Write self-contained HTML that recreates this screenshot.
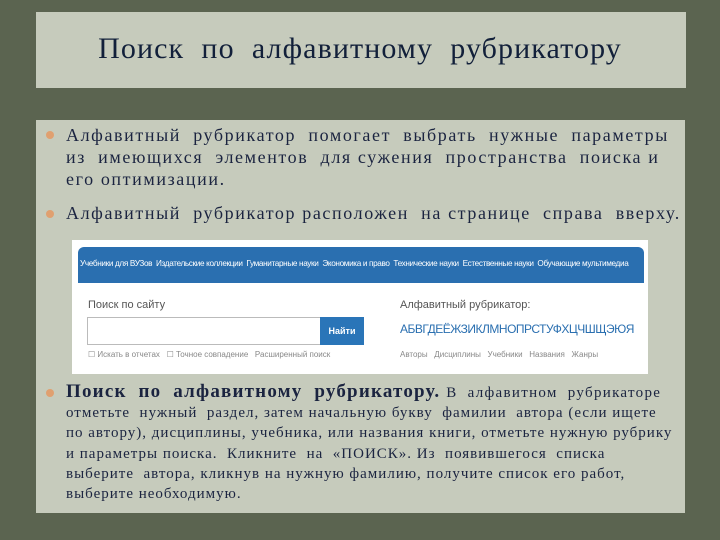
<!DOCTYPE html>
<html><head><meta charset="utf-8"><style>
body{margin:0;width:720px;height:540px;background:#5b6450;position:relative;overflow:hidden;font-family:"Liberation Serif",serif;color:#1b2440}
.box{position:absolute;background:#c6cbbc}
.t{position:absolute;white-space:nowrap}
.b{position:absolute;width:8px;height:8px;border-radius:50%;background:#e0a070}
.s{font-family:"Liberation Sans",sans-serif;position:absolute;white-space:nowrap}
</style></head><body>
<div class="box" style="left:36px;top:12px;width:650px;height:76px"></div>
<div class="t" style="left:0;width:720px;text-align:center;top:32px;font-size:30px;letter-spacing:1.1px;color:#12203a">Поиск&nbsp; по&nbsp; алфавитному&nbsp; рубрикатору</div>
<div class="box" style="left:36px;top:120px;width:649px;height:393px"></div>
<div class="b" style="left:46px;top:131px"></div>
<div class="t" style="left:66px;top:124px;font-size:18px;letter-spacing:1.6px;line-height:22px">Алфавитный&nbsp; рубрикатор&nbsp; помогает&nbsp; выбрать&nbsp; нужные&nbsp; параметры<br>из&nbsp; имеющихся&nbsp; элементов&nbsp; для сужения&nbsp; пространства&nbsp; поиска и<br>его оптимизации.</div>
<div class="b" style="left:46px;top:210px"></div>
<div class="t" style="left:66px;top:203px;font-size:18px;letter-spacing:1.6px">Алфавитный&nbsp; рубрикатор расположен&nbsp; на странице&nbsp; справа&nbsp; вверху.</div>
<div style="position:absolute;left:72px;top:240px;width:576px;height:134px;background:#fff"></div>
<div style="position:absolute;left:78px;top:247px;width:566px;height:36px;background:#2a6fb0;border-radius:6px 6px 0 0"></div>
<div class="s" style="left:80px;top:259px;font-size:8.2px;color:#fff;letter-spacing:-0.35px">Учебники для ВУЗов&nbsp; Издательские коллекции&nbsp; Гуманитарные науки&nbsp; Экономика и право&nbsp; Технические науки&nbsp; Естественные науки&nbsp; Обучающие мультимедиа</div>
<div class="s" style="left:88px;top:299px;font-size:11px;color:#555">Поиск по сайту</div>
<div style="position:absolute;left:87px;top:317px;width:232px;height:26px;border:1px solid #bbb"></div>
<div style="position:absolute;left:320px;top:317px;width:44px;height:28px;background:#2a75b8;color:#fff;font:bold 9px 'Liberation Sans',sans-serif;text-align:center;line-height:28px">Найти</div>
<div class="s" style="left:88px;top:350px;font-size:8px;color:#888">☐ Искать в отчетах&nbsp;&nbsp; ☐ Точное совпадение&nbsp;&nbsp; Расширенный поиск</div>
<div class="s" style="left:400px;top:299px;font-size:11px;color:#555">Алфавитный рубрикатор:</div>
<div class="s" style="left:400px;top:322px;font-size:12px;color:#2a6fb0;letter-spacing:-0.5px">АБВГДЕЁЖЗИКЛМНОПРСТУФХЦЧШЩЭЮЯ</div>
<div class="s" style="left:400px;top:350px;font-size:8px;color:#888">Авторы&nbsp;&nbsp; Дисциплины&nbsp;&nbsp; Учебники&nbsp;&nbsp; Названия&nbsp;&nbsp; Жанры</div>
<div class="b" style="left:46px;top:389px"></div>
<div class="t" style="left:66px;top:381px;font-size:19px;letter-spacing:1.2px"><b>Поиск&nbsp; по&nbsp; алфавитному&nbsp; рубрикатору.</b> <span style="font-size:15px;letter-spacing:1.3px">В&nbsp; алфавитном&nbsp; рубрикаторе</span></div>
<div class="t" style="left:66px;top:403px;font-size:15px;letter-spacing:1.0px;line-height:20.3px">отметьте&nbsp; нужный&nbsp; раздел, затем начальную букву&nbsp; фамилии&nbsp; автора (если ищете<br>по автору), дисциплины, учебника, или названия книги, отметьте нужную рубрику<br>и параметры поиска.&nbsp; Кликните&nbsp; на&nbsp; «ПОИСК». Из&nbsp; появившегося&nbsp; списка<br>выберите&nbsp; автора, кликнув на нужную фамилию, получите список его работ,<br>выберите необходимую.</div>
</body></html>
